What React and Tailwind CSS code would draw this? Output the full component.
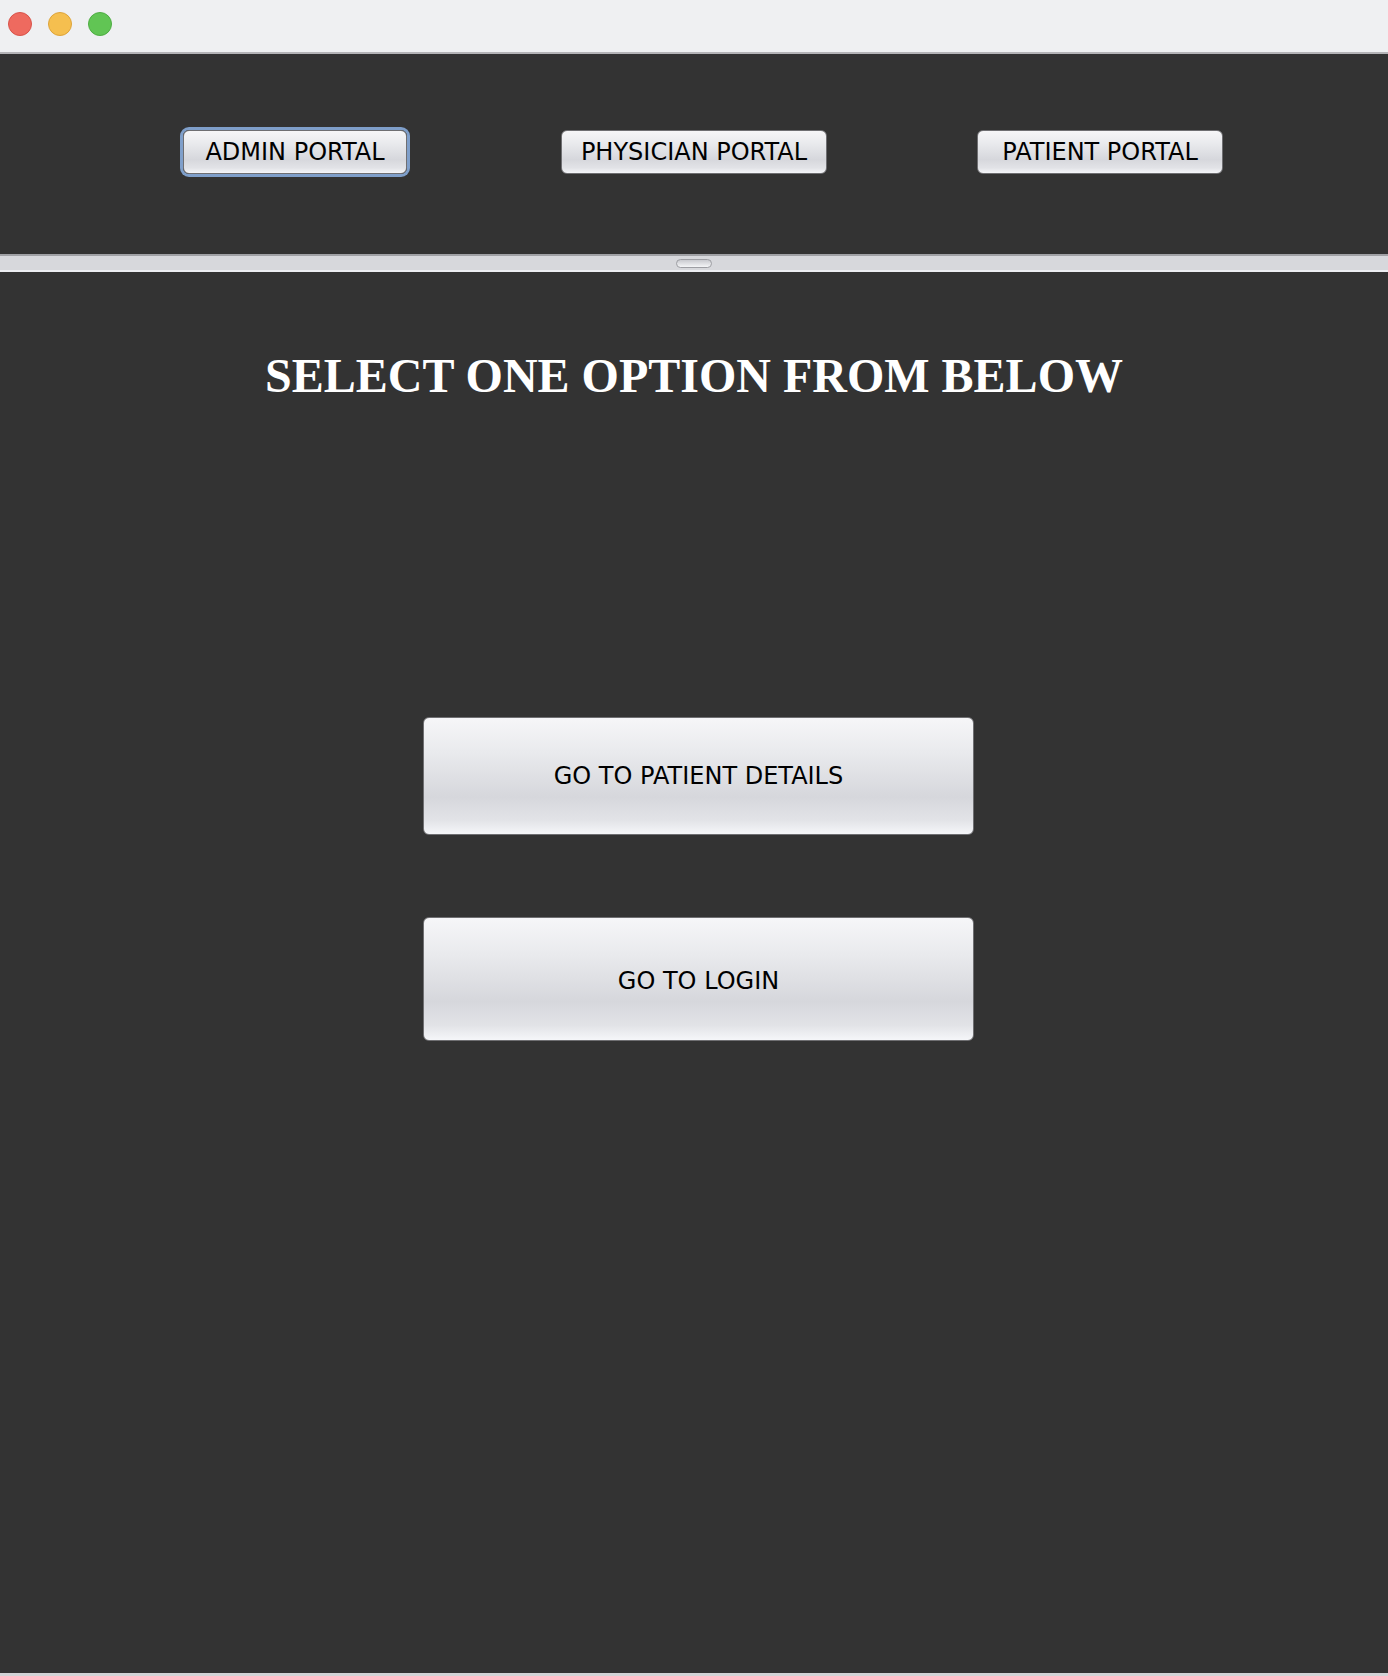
import React from "react";

// Aqua-style button face shared by every button on the page
const face =
  "flex items-center justify-center border border-[#6f6f72] rounded-[6px] bg-[linear-gradient(to_bottom,#f6f6f8_0%,#e9eaed_30%,#d6d7dc_68%,#e2e3e7_88%,#f5f6f9_100%)] text-black font-['DejaVu_Sans',sans-serif] text-[24px] leading-none";

function PortalButton({ label, className }) {
  return <button className={`${face} h-[44px] shrink-0 ${className}`}>{label}</button>;
}

function BigButton({ label, className }) {
  return <button className={`${face} w-[551px] ${className}`}>{label}</button>;
}

export default function App() {
  return (
    <div className="h-[1676px] flex flex-col bg-[#333333] overflow-hidden">
      {/* Window title bar */}
      <div className="h-[54px] shrink-0 bg-[#eff0f2] border-b-2 border-[#b4b4b7] flex items-start gap-[16px] pl-[8px] pt-[12px]">
        <span className="w-[24px] h-[24px] rounded-full bg-[#ee6a5f] border border-[#d9534a]" />
        <span className="w-[24px] h-[24px] rounded-full bg-[#f5bf4f] border border-[#dea43a]" />
        <span className="w-[24px] h-[24px] rounded-full bg-[#61c554] border border-[#4ead43]" />
      </div>

      {/* Top panel with portal buttons */}
      <div className="h-[200px] shrink-0 flex items-start pt-[76px]">
        <PortalButton
          label="ADMIN PORTAL"
          className="ml-[183px] w-[224px] shadow-[0_0_0_3px_#7f9fca]"
        />
        <PortalButton label="PHYSICIAN PORTAL" className="ml-[154px] w-[266px]" />
        <PortalButton label="PATIENT PORTAL" className="ml-[150px] w-[246px]" />
      </div>

      {/* Split pane divider */}
      <div className="h-[18px] shrink-0 bg-[#d7d8dc] border-t-2 border-[#a0a1a5] border-b-2 border-b-[#eceef1] flex items-center justify-center">
        <div className="w-[36px] h-[9px] rounded-full border border-[#9d9ea3] bg-[linear-gradient(to_bottom,#c9cacf,#f4f5f7)]" />
      </div>

      {/* Lower panel */}
      <div className="flex-1 flex flex-col border-b-[3px] border-[#d2d3d6]">
        <h1 className="pt-[80px] text-center text-white font-['Liberation_Serif',serif] font-bold text-[48px] leading-[48px]">
          SELECT ONE OPTION FROM BELOW
        </h1>
        <div className="flex flex-col items-start pl-[423px] pt-[317px] gap-[82px]">
          <BigButton label="GO TO PATIENT DETAILS" className="h-[118px]" />
          <BigButton label="GO TO LOGIN" className="h-[124px] pt-[4px]" />
        </div>
      </div>
    </div>
  );
}
